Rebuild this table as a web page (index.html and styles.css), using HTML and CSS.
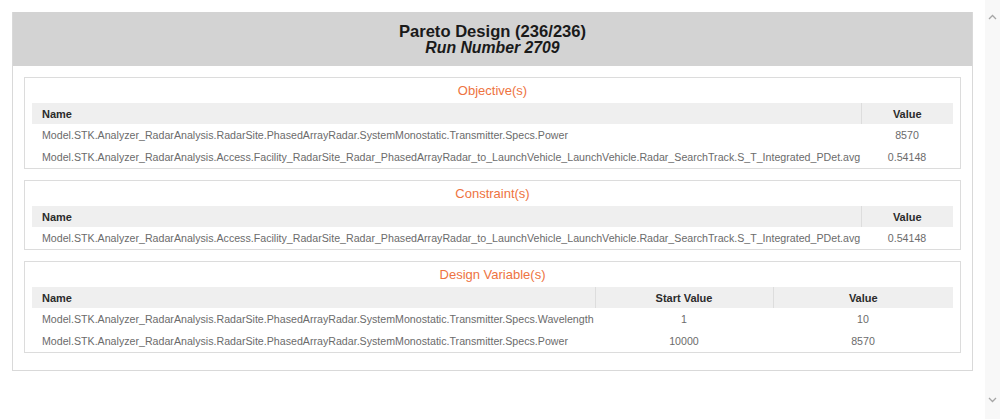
FILE: index.html
```html
<!DOCTYPE html>
<html>
<head>
<meta charset="utf-8">
<link rel="stylesheet" href="styles.css">
</head>
<body>
<div class="page">
  <main class="main">
    <div class="panel">
      <div class="panel-head">
        <div class="title">Pareto Design (236/236)</div>
        <div class="subtitle">Run Number 2709</div>
      </div>
      <div class="panel-body">
        <section class="group">
          <h2 class="group-title">Objective(s)</h2>
          <table class="grid">
            <colgroup><col><col class="c-val"></colgroup>
            <thead><tr><th class="left">Name</th><th>Value</th></tr></thead>
            <tbody>
              <tr><td class="left">Model.STK.Analyzer_RadarAnalysis.RadarSite.PhasedArrayRadar.SystemMonostatic.Transmitter.Specs.Power</td><td>8570</td></tr>
              <tr><td class="left">Model.STK.Analyzer_RadarAnalysis.Access.Facility_RadarSite_Radar_PhasedArrayRadar_to_LaunchVehicle_LaunchVehicle.Radar_SearchTrack.S_T_Integrated_PDet.avg</td><td>0.54148</td></tr>
            </tbody>
          </table>
        </section>
        <section class="group">
          <h2 class="group-title">Constraint(s)</h2>
          <table class="grid">
            <colgroup><col><col class="c-val"></colgroup>
            <thead><tr><th class="left">Name</th><th>Value</th></tr></thead>
            <tbody>
              <tr><td class="left">Model.STK.Analyzer_RadarAnalysis.Access.Facility_RadarSite_Radar_PhasedArrayRadar_to_LaunchVehicle_LaunchVehicle.Radar_SearchTrack.S_T_Integrated_PDet.avg</td><td>0.54148</td></tr>
            </tbody>
          </table>
        </section>
        <section class="group">
          <h2 class="group-title">Design Variable(s)</h2>
          <table class="grid">
            <colgroup><col><col class="c-start"><col class="c-end"></colgroup>
            <thead><tr><th class="left">Name</th><th>Start Value</th><th>Value</th></tr></thead>
            <tbody>
              <tr><td class="left">Model.STK.Analyzer_RadarAnalysis.RadarSite.PhasedArrayRadar.SystemMonostatic.Transmitter.Specs.Wavelength</td><td>1</td><td>10</td></tr>
              <tr><td class="left">Model.STK.Analyzer_RadarAnalysis.RadarSite.PhasedArrayRadar.SystemMonostatic.Transmitter.Specs.Power</td><td>10000</td><td>8570</td></tr>
            </tbody>
          </table>
        </section>
      </div>
    </div>
  </main>
  <aside class="scrollbar">
    <svg class="arrow" width="9" height="6" viewBox="0 0 9 6"><path d="M1 5 L4.5 1.5 L8 5" fill="none" stroke="#a6a6a6" stroke-width="1.3"/></svg>
    <svg class="arrow" width="9" height="6" viewBox="0 0 9 6"><path d="M1 1 L4.5 4.5 L8 1" fill="none" stroke="#a6a6a6" stroke-width="1.3"/></svg>
  </aside>
</div>
</body>
</html>
```

FILE: styles.css
```css
html, body {
  margin: 0;
  padding: 0;
  background: #fff;
  font-family: "Liberation Sans", Arial, sans-serif;
}
.page {
  display: flex;
  height: 419px;
  overflow: hidden;
}
.main {
  width: 985px;
  padding: 12px 12px 0 12px;
  box-sizing: border-box;
}
.panel {
  border: 1px solid #d9d9d9;
  border-top: none;
}
.panel-head {
  background: #d3d3d3;
  height: 54px;
  box-sizing: border-box;
  padding-top: 12px;
  text-align: center;
  color: #1a1a1a;
  font-weight: bold;
  line-height: 16px;
}
.title {
  font-size: 16.6px;
}
.subtitle {
  font-size: 15.8px;
  font-style: italic;
}
.panel-body {
  padding: 11px 11px 17px 11px;
  display: flex;
  flex-direction: column;
  gap: 11px;
}
.group {
  border: 1px solid #dcdcdc;
  padding: 0 7px 0 7px;
}
.group-title {
  margin: 0;
  height: 25px;
  line-height: 25px;
  text-align: center;
  font-weight: normal;
  font-size: 13px;
  color: #ee7341;
}
.grid {
  width: 100%;
  border-collapse: collapse;
  table-layout: fixed;
  font-size: 10.65px;
}
.c-val { width: 92px; }
.c-start { width: 178px; }
.c-end { width: 180px; }
.grid th {
  background: #efefef;
  color: #2b2b2b;
  font-weight: bold;
  font-size: 11px;
  height: 21px;
  padding: 0;
  text-align: center;
  border-left: 1px solid #dddddd;
}
.grid th.left {
  border-left: none;
}
.grid td {
  height: 22px;
  padding: 0;
  color: #6b6b6b;
  text-align: center;
  white-space: nowrap;
}
.grid .left {
  text-align: left;
  padding-left: 10px;
}
.scrollbar {
  width: 15px;
  background: #f8f8f8;
  display: flex;
  flex-direction: column;
  justify-content: space-between;
  align-items: center;
  padding: 14px 0 16px 0;
  box-sizing: border-box;
}
.arrow {
  display: block;
}
```
